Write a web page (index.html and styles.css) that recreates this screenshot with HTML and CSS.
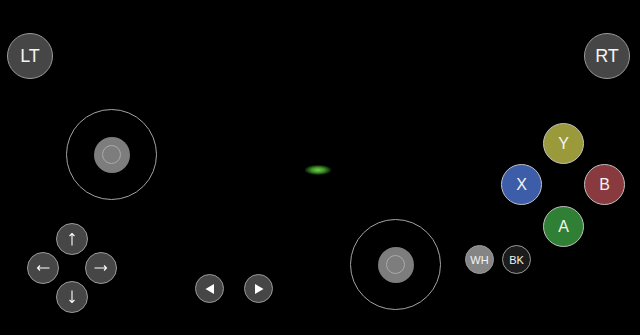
FILE: index.html
```html
<!DOCTYPE html>
<html lang="en">
<head>
  <meta charset="UTF-8">
  <title>Gamepad</title>
  <link rel="stylesheet" href="styles.css">
</head>
<body>

  <div class="pad">

    <div class="btn trigger lt">LT</div>
    <div class="btn trigger rt">RT</div>

    <div class="stick stick-left"><div class="thumb"></div></div>
    <div class="stick stick-right"><div class="thumb"></div></div>

    <div class="status-light"></div>

    <!-- d-pad arrows drawn thin, like the original glyphs -->
    <div class="btn dir up">
      <svg width="14" height="14" viewBox="0 0 14 14"><path d="M7 13.5 V1.5 M4.5 4 L7 1.5 L9.5 4" fill="none" stroke="#fff" stroke-width="1.1"/></svg>
    </div>
    <div class="btn dir left">
      <svg width="14" height="14" viewBox="0 0 14 14"><path d="M13.5 7 H1.5 M4 4.5 L1.5 7 L4 9.5" fill="none" stroke="#fff" stroke-width="1.1"/></svg>
    </div>
    <div class="btn dir right">
      <svg width="14" height="14" viewBox="0 0 14 14"><path d="M0.5 7 H12.5 M10 4.5 L12.5 7 L10 9.5" fill="none" stroke="#fff" stroke-width="1.1"/></svg>
    </div>
    <div class="btn dir down">
      <svg width="14" height="14" viewBox="0 0 14 14"><path d="M7 0.5 V12.5 M4.5 10 L7 12.5 L9.5 10" fill="none" stroke="#fff" stroke-width="1.1"/></svg>
    </div>

    <div class="btn nav prev">
      <svg width="12" height="12" viewBox="0 0 12 12"><path d="M1.5 6 L10 1 L10 11 Z" fill="#fff"/></svg>
    </div>
    <div class="btn nav next">
      <svg width="12" height="12" viewBox="0 0 12 12"><path d="M10.5 6 L2 1 L2 11 Z" fill="#fff"/></svg>
    </div>

    <div class="btn face y">Y</div>
    <div class="btn face x">X</div>
    <div class="btn face b">B</div>
    <div class="btn face a">A</div>

    <div class="btn small wh">WH</div>
    <div class="btn small bk">BK</div>

  </div>

</body>
</html>
```

FILE: styles.css
```css
body {
  margin: 0; padding: 0;
  background: #000;
  font-family: "Liberation Sans", Arial, sans-serif;
}
.pad {
  position: relative;
  width: 640px; height: 335px;
  background: #000;
  overflow: hidden;
}
.btn {
  position: absolute;
  box-sizing: border-box;
  border-radius: 50%;
  border: 1.5px solid #9a9a9a;
  background: #464646;
  color: #f4f4f4;
  display: flex;
  align-items: center;
  justify-content: center;
}
.btn svg { display: block; }

/* triggers */
.trigger { width: 46px; height: 46px; font-size: 18px; top: 33px; }
.lt { left: 7px; }
.rt { left: 584px; }

/* sticks */
.stick {
  position: absolute;
  box-sizing: border-box;
  width: 91px; height: 91px;
  border-radius: 50%;
  border: 1.5px solid #a4a4a4;
  display: flex; align-items: center; justify-content: center;
}
.stick-left { left: 66px; top: 109px; }
.stick-right { left: 350px; top: 219px; }
.thumb {
  width: 36px; height: 36px;
  border-radius: 50%;
  background: #7d7d7d;
  display: flex; align-items: center; justify-content: center;
}
.thumb::after {
  content: "";
  width: 17px; height: 17px;
  border-radius: 50%;
  border: 1px solid #aaa;
}

/* green status light */
.status-light {
  position: absolute;
  left: 305px; top: 165px;
  width: 26px; height: 10px;
  border-radius: 50%;
  background: radial-gradient(ellipse at center, #7ccc50 0%, #3f9428 35%, rgba(25,80,15,0.55) 65%, rgba(0,0,0,0) 100%);
}

/* d-pad */
.dir { width: 32px; height: 32px; }
.up { left: 56px; top: 223px; }
.left { left: 27px; top: 252px; }
.right { left: 85px; top: 252px; }
.down { left: 56px; top: 281px; }

/* prev / next */
.nav { width: 29px; height: 29px; top: 274px; }
.prev { left: 195px; }
.next { left: 244px; }

/* face buttons */
.face { width: 41px; height: 41px; font-size: 16px; border-color: #c0c0c0; }
.y { left: 543px; top: 123px; background: #9a9a3a; }
.x { left: 501px; top: 164px; background: #3d5da8; }
.b { left: 584px; top: 164px; background: #893a3f; }
.a { left: 543px; top: 206px; background: #2f7f35; }

.small { width: 29px; height: 29px; top: 245px; font-size: 11px; }
.wh { left: 465px; background: #858585; }
.bk { left: 502px; background: #1c1c1c; }
```
